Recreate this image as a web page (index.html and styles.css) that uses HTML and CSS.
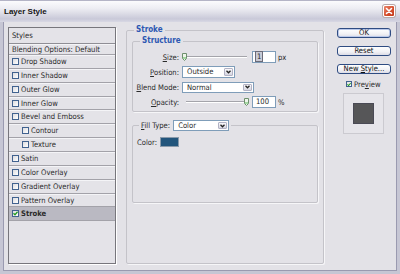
FILE: index.html
```html
<!DOCTYPE html>
<html lang="en">
<head>
    <meta charset="UTF-8">
    <title>Layer Style</title>
    <link rel="stylesheet" href="styles.css">
</head>
<body>
<div class="window">
    <div class="titlebar">
        <span class="title">Layer Style</span>
        <span class="close-btn">
            <svg width="12" height="12" viewBox="0 0 12 12">
                <path d="M3.5 3.5 L8.5 8.5 M8.5 3.5 L3.5 8.5" stroke="#fff" stroke-width="1.6" stroke-linecap="round"/>
            </svg>
        </span>
    </div>

    <div class="client">
        <!-- Styles list -->
        <div class="style-list">
            <div class="list-head">Styles</div>
            <div class="list-row blend">Blending Options: Default</div>
            <div class="list-row"><span class="check"></span>Drop Shadow</div>
            <div class="list-row"><span class="check"></span>Inner Shadow</div>
            <div class="list-row"><span class="check"></span>Outer Glow</div>
            <div class="list-row"><span class="check"></span>Inner Glow</div>
            <div class="list-row"><span class="check"></span>Bevel and Emboss</div>
            <div class="list-row sub"><span class="check"></span>Contour</div>
            <div class="list-row sub"><span class="check"></span>Texture</div>
            <div class="list-row"><span class="check"></span>Satin</div>
            <div class="list-row"><span class="check"></span>Color Overlay</div>
            <div class="list-row"><span class="check"></span>Gradient Overlay</div>
            <div class="list-row"><span class="check"></span>Pattern Overlay</div>
            <div class="list-row selected">
                <span class="check checked">
                    <svg width="5" height="5" viewBox="0 0 5 5"><path d="M0.5 2.3 L2 3.8 L4.6 0.8" stroke="#1f9a1f" stroke-width="1.3" fill="none"/></svg>
                </span>Stroke
            </div>
        </div>

        <!-- Stroke settings -->
        <fieldset class="group stroke-group">
            <legend>Stroke</legend>

            <fieldset class="group structure">
                <legend>Structure</legend>
                <div class="form-grid">
                    <span class="form-label"><u>S</u>ize:</span>
                    <div class="control">
                        <div class="slider">
                            <svg class="thumb" width="5" height="8" viewBox="0 0 5 8"><path d="M0.5 0.5 H4.5 V5.5 L2.5 7.5 L0.5 5.5 Z" fill="#eef6ea" stroke="#6d8f6d"/><path d="M1 5 H4" stroke="#58b858"/></svg>
                        </div>
                        <span class="field"><span class="selected-text">1</span></span>
                        <span class="unit">px</span>
                    </div>

                    <span class="form-label"><u>P</u>osition:</span>
                    <div class="control">
                        <div class="combo combo-position">
                            <span class="combo-value">Outside</span>
                            <span class="combo-btn"><svg width="5" height="4" viewBox="0 0 5 4"><path d="M0.5 0.8 L2.5 2.8 L4.5 0.8" stroke="#222" stroke-width="1.3" fill="none"/></svg></span>
                        </div>
                    </div>

                    <span class="form-label"><u>B</u>lend Mode:</span>
                    <div class="control">
                        <div class="combo combo-blend">
                            <span class="combo-value">Normal</span>
                            <span class="combo-btn"><svg width="5" height="4" viewBox="0 0 5 4"><path d="M0.5 0.8 L2.5 2.8 L4.5 0.8" stroke="#222" stroke-width="1.3" fill="none"/></svg></span>
                        </div>
                    </div>

                    <span class="form-label"><u>O</u>pacity:</span>
                    <div class="control">
                        <div class="slider slider-full">
                            <svg class="thumb" width="5" height="8" viewBox="0 0 5 8"><path d="M0.5 0.5 H4.5 V5.5 L2.5 7.5 L0.5 5.5 Z" fill="#eef6ea" stroke="#6d8f6d"/><path d="M1 5 H4" stroke="#58b858"/></svg>
                        </div>
                        <span class="field">100</span>
                        <span class="unit">%</span>
                    </div>
                </div>
            </fieldset>

            <fieldset class="group fill">
                <legend>
                    <span class="fill-label"><u>F</u>ill Type:</span>
                    <span class="combo combo-fill">
                        <span class="combo-value">Color</span>
                        <span class="combo-btn"><svg width="5" height="4" viewBox="0 0 5 4"><path d="M0.5 0.8 L2.5 2.8 L4.5 0.8" stroke="#222" stroke-width="1.3" fill="none"/></svg></span>
                    </span>
                </legend>
                <div class="color-row">
                    <span>Color:</span>
                    <span class="swatch"></span>
                </div>
            </fieldset>
        </fieldset>

        <!-- Buttons and preview -->
        <div class="side">
            <button class="btn default">OK</button>
            <button class="btn">Reset</button>
            <button class="btn">New <u>S</u>tyle...</button>
            <div class="preview-check">
                <span class="check checked">
                    <svg width="5" height="5" viewBox="0 0 5 5"><path d="M0.5 2.3 L2 3.8 L4.6 0.8" stroke="#1f9a1f" stroke-width="1.3" fill="none"/></svg>
                </span>Pre<u>v</u>iew
            </div>
            <div class="preview-box">
                <div class="preview-swatch"></div>
            </div>
        </div>
    </div>
</div>
</body>
</html>
```

FILE: styles.css
```css
/* Base */
* {
    box-sizing: border-box;
}
body {
    margin: 0;
    font-family: "DejaVu Sans Condensed", "DejaVu Sans", sans-serif;
    font-stretch: condensed;
    font-size: 7.6px;
    color: #2a2a2a;
}
u {
    text-decoration-thickness: 1px;
}

/* Window frame */
.window {
    width: 400px;
    height: 274px;
    display: flex;
    flex-direction: column;
    background-color: #e3e2e7;
}
.titlebar {
    height: 22px;
    flex: none;
    display: flex;
    align-items: center;
    justify-content: space-between;
    padding: 0 5px 1px 4px;
    background: linear-gradient(to bottom, #fbfbfd 0%, #ededf3 35%, #dcdce6 60%, #c9c9d9 85%, #d8d8e4 100%);
    border-top: 1px solid #b4b4c6;
}
.title {
    font-family: "Liberation Sans", Arial, sans-serif;
    font-weight: bold;
    font-size: 8px;
    color: #151515;
}
.close-btn {
    width: 12px;
    height: 12px;
    display: flex;
    border: 1px solid #fff;
    border-radius: 2px;
    background: linear-gradient(135deg, #e9846a 0%, #d6502f 55%, #c2391a 100%);
    box-shadow: 0 0 0 1px #b9a9a9;
}
.close-btn svg {
    margin: -1px;
}
.client {
    flex: 1;
    display: flex;
    align-items: flex-start;
    padding: 5px 0 0 5px;
    border: 3px solid #c6c6d4;
    border-top: 0;
    box-shadow: inset 1px 0 0 #9a9ab0, inset -1px -1px 0 #9a9ab0;
}

/* Styles list */
.style-list {
    width: 108px;
    height: 237px;
    flex: none;
    background-color: #e4e3e8;
    border: 1px solid #77767c;
    box-shadow: 1px 1px 0 #fff;
}
.list-head {
    height: 16px;
    line-height: 15px;
    padding-left: 3px;
    border-bottom: 1px solid #8f8e95;
}
.list-row {
    height: 13.87px;
    display: flex;
    align-items: center;
    padding-left: 3px;
    border-bottom: 1px solid #a3a2a9;
    box-shadow: inset 0 1px 0 #f4f4f7;
    white-space: nowrap;
}
.list-row.blend {
    height: 11px;
}
.list-row.sub {
    padding-left: 13px;
}
.list-row.selected {
    background-color: #bab9c2;
    font-weight: bold;
    box-shadow: none;
}
.check {
    width: 7px;
    height: 7px;
    flex: none;
    display: inline-flex;
    align-items: center;
    justify-content: center;
    margin-right: 2px;
    border: 1px solid #41628f;
    background: linear-gradient(135deg, #dcdce0, #fff);
}

/* Group boxes */
.group {
    margin: 0;
    padding: 0;
    min-width: 0;
    border: 1px solid #c4c3c9;
    border-radius: 2px;
    box-shadow: 1px 1px 0 #f6f6f8;
}
.group > legend {
    margin-left: 7px;
    padding: 0 2px;
    line-height: 10px;
    font-size: 8px;
    font-weight: bold;
    color: #2d58b2;
}
.stroke-group {
    width: 198px;
    height: 239px;
    flex: none;
    margin: -2px 0 0 10px;
}
.structure {
    margin: 1px 5px 0;
    padding: 5px 0 3px;
}

/* Structure form */
.form-grid {
    display: grid;
    grid-template-columns: 46px 1fr;
    grid-auto-rows: 12px;
    row-gap: 3px;
    column-gap: 3px;
    align-items: center;
}
.form-label {
    text-align: right;
    white-space: nowrap;
}
.control {
    display: flex;
    align-items: center;
}
.slider {
    width: 67px;
    height: 12px;
    margin-right: 3px;
    display: flex;
    align-items: center;
    background:
        linear-gradient(#a4a4aa, #a4a4aa) no-repeat 4px 5px / 61px 1px,
        linear-gradient(#fff, #fff) no-repeat 4px 6px / 61px 1px;
}
.slider-full {
    justify-content: flex-end;
}
.thumb {
    display: block;
}
.field {
    width: 24px;
    height: 12px;
    line-height: 10px;
    padding-left: 3px;
    border: 1px solid #7f9db9;
    background-color: #fff;
}
.selected-text {
    padding: 0 1px;
    background-color: #c9cad6;
    outline: 1px solid #6b6b78;
}
.unit {
    margin-left: 2px;
}
.combo {
    display: flex;
    align-items: stretch;
    height: 12px;
    border: 1px solid #7f9db9;
    background-color: #fff;
}
.combo-value {
    flex: 1;
    padding-left: 4px;
    line-height: 10px;
}
.combo-btn {
    width: 9px;
    margin: 1px;
    display: flex;
    align-items: center;
    justify-content: center;
    border: 1px solid #b2b2c4;
    border-radius: 1px;
    background: linear-gradient(#f9f9fb, #d6d6e0);
}
.combo-position {
    width: 53px;
}
.combo-blend {
    width: 72px;
    height: 11px;
}
.combo-blend .combo-value {
    line-height: 9px;
}

/* Fill type */
.fill {
    height: 83px;
    margin: 8px 5px 0;
    padding: 0;
}
.fill > legend {
    margin-left: 6px;
    display: flex;
    align-items: center;
    line-height: 11px;
    font-size: 7.6px;
    font-weight: normal;
    color: #2a2a2a;
}
.fill-label {
    margin-right: 3px;
}
.combo-fill {
    width: 56px;
    height: 11px;
}
.combo-fill .combo-value {
    line-height: 9px;
}
.color-row {
    display: flex;
    align-items: center;
    margin-top: 6px;
    padding-left: 4px;
}
.swatch {
    width: 19px;
    height: 10px;
    margin-left: 3px;
    background-color: #22557c;
    border: 1px solid #8a9aaa;
}

/* Side column */
.side {
    width: 54px;
    flex: none;
    margin: 1px 0 0 13px;
    display: flex;
    flex-direction: column;
    align-items: flex-start;
}
.btn {
    width: 54px;
    height: 10px;
    margin-bottom: 8px;
    padding: 0;
    font: inherit;
    line-height: 8px;
    color: #111;
    border: 1px solid #2f4c82;
    border-radius: 3px;
    background: linear-gradient(#ffffff, #f1f1f5 60%, #dcdce6);
}
.btn.default {
    box-shadow: inset 0 0 0 1px #b9c8ea;
}
.preview-check {
    display: flex;
    align-items: center;
    margin: -2px 0 0 9px;
    height: 8px;
}
.preview-check .check {
    width: 6px;
    height: 6px;
    margin-right: 2px;
}
.preview-box {
    width: 41px;
    height: 41px;
    margin: 5px 0 0 6px;
    display: flex;
    align-items: center;
    justify-content: center;
    border: 1px solid #cbcad0;
    background-color: #e6e5ea;
}
.preview-swatch {
    width: 21px;
    height: 21px;
    background-color: #565658;
    border: 1px solid #4a4a55;
}
```
